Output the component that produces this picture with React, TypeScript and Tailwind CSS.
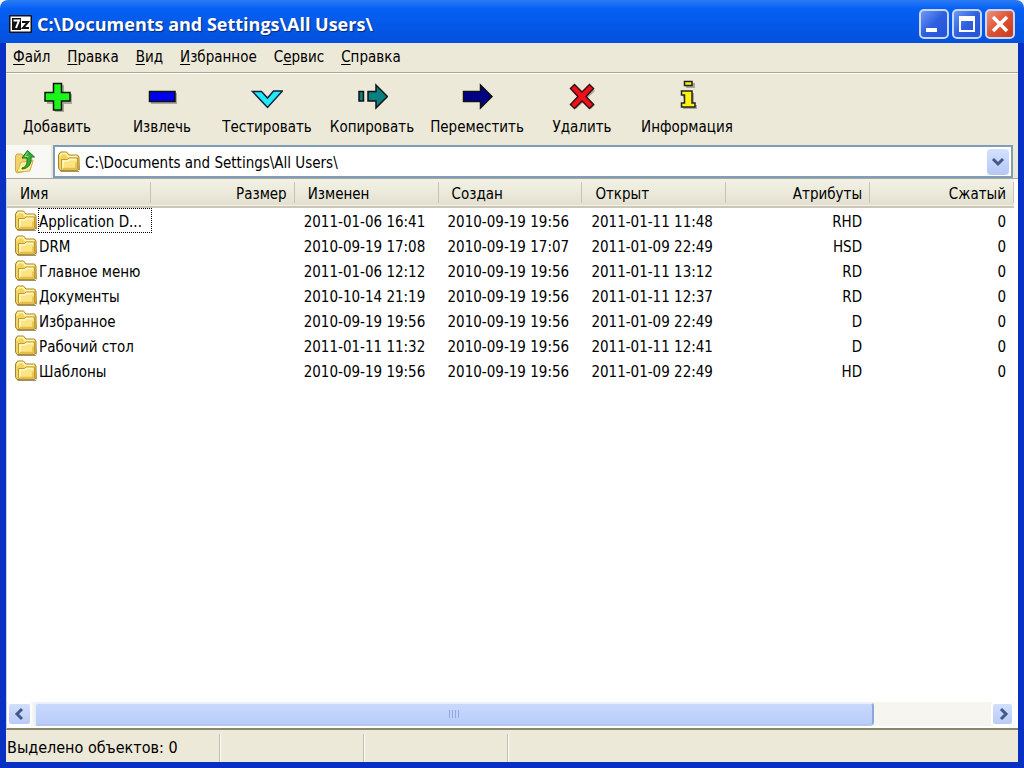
import type { ReactNode } from "react";

type Entry = {
  name: string;
  modified: string;
  created: string;
  accessed: string;
  attributes: string;
};

const menuItems = [
  { before: "", key: "Ф", after: "айл" },
  { before: "", key: "П", after: "равка" },
  { before: "", key: "В", after: "ид" },
  { before: "", key: "И", after: "збранное" },
  { before: "С", key: "е", after: "рвис" },
  { before: "", key: "С", after: "правка" },
];

const entries: Entry[] = [
  { name: "Application D...", modified: "2011-01-06 16:41", created: "2010-09-19 19:56", accessed: "2011-01-11 11:48", attributes: "RHD" },
  { name: "DRM", modified: "2010-09-19 17:08", created: "2010-09-19 17:07", accessed: "2011-01-09 22:49", attributes: "HSD" },
  { name: "Главное меню", modified: "2011-01-06 12:12", created: "2010-09-19 19:56", accessed: "2011-01-11 13:12", attributes: "RD" },
  { name: "Документы", modified: "2010-10-14 21:19", created: "2010-09-19 19:56", accessed: "2011-01-11 12:37", attributes: "RD" },
  { name: "Избранное", modified: "2010-09-19 19:56", created: "2010-09-19 19:56", accessed: "2011-01-09 22:49", attributes: "D" },
  { name: "Рабочий стол", modified: "2011-01-11 11:32", created: "2010-09-19 19:56", accessed: "2011-01-11 12:41", attributes: "D" },
  { name: "Шаблоны", modified: "2010-09-19 19:56", created: "2010-09-19 19:56", accessed: "2011-01-09 22:49", attributes: "HD" },
];

const columns = [
  { title: "Имя", right: false },
  { title: "Размер", right: true },
  { title: "Изменен", right: false },
  { title: "Создан", right: false },
  { title: "Открыт", right: false },
  { title: "Атрибуты", right: true },
  { title: "Сжатый", right: true },
];

function ToolIcon({ children }: { children: ReactNode }) {
  return (
    <svg width="32" height="32" viewBox="0 0 32 32" strokeWidth="1.5" aria-hidden="true">
      {children}
    </svg>
  );
}

const tools = [
  {
    label: "Добавить",
    icon: (
      <>
        <path d="M14 5h9v9h8v10h-8v8h-9v-8H6V14h8z" fill="#aaa79a" />
        <path d="M12.500 3.500h8v9h8.500v8.500h-8.500v9h-8v-9H4v-8.500h8.500z" fill="#1af51a" stroke="#111" />
      </>
    ),
  },
  {
    label: "Извлечь",
    icon: (
      <>
        <path d="M5 13h26v11H5z" fill="#aaa79a" />
        <path d="M3.500 11.500H29v10H3.500z" fill="#0000f0" stroke="#111" />
      </>
    ),
  },
  {
    label: "Тестировать",
    icon: (
      <path d="M1.500 11.500h9l6 6.500 6-7H31.500L16.500 27.500z" fill="#20eaf5" stroke="#124" />
    ),
  },
  {
    label: "Копировать",
    icon: (
      <path d="M3 11.500h4.500v9.500H3zM12 11.500h8V5l11.500 11.500L20 28v-7h-8z" fill="#088082" stroke="#111" />
    ),
  },
  {
    label: "Переместить",
    icon: (
      <path d="M2.500 11.500h17V5L31 16.500 19.500 28v-6.500h-17z" fill="#000087" stroke="#111" />
    ),
  },
  {
    label: "Удалить",
    icon: (
      <>
        <path d="M10 6l7.500 7L25 6l4 5-7.500 7 7.500 7-4 4-7.500-7-7.500 7-4-4 7-7-7-7z" fill="#aaa79a" />
        <path d="M8.500 4.500l7.500 7.500 7.500-7.500 4 4-7.500 8 7.500 8-4 4-7.500-7.500-7.500 7.500-4-4 7.500-8-7.500-8z" fill="#f0101c" stroke="#311" />
      </>
    ),
  },
  {
    label: "Информация",
    icon: (
      <>
        <path d="M15 3h9v5h-9zM12 13h11v12h3v4H12v-4h3v-7h-3z" fill="#aaa79a" />
        <path d="M13.500 1.500h7.500v4h-7.500zM10.500 11H21v12h3v4H10.500v-4h3v-8h-3z" fill="#fff212" stroke="#222" strokeWidth="1.500" />
      </>
    ),
  },
];

function FolderIcon() {
  return (
    <svg width="24" height="22" viewBox="0 0 24 22" className="shrink-0" aria-hidden="true">
      <path d="M3 20h19l1-1V8l-1 13H4z" fill="#75642e" opacity=".7" />
      <path d="M1.500 17V4l2-3h6l2.500 3h8.500l1.500 2v12L20.500 19.500H3z" fill="#f2d35e" stroke="#a5832b" />
      <path d="M3 5.500L4.500 2.500h4.500l2 3h9" fill="none" stroke="#fff6b8" strokeWidth="1.500" />
      <path d="M4.500 8.500h6l1.500-1.500h8.500V18l-1 1h-14l-1-1z" fill="#fbe481" stroke="#c19a35" />
      <path d="M6 17.500V10h5l1.500-1.500H19" fill="none" stroke="#fff8c9" strokeWidth="1.500" />
      <path d="M6 17.500h13v-6" fill="none" stroke="#e8bd42" strokeWidth="1.500" />
    </svg>
  );
}

function UpFolderIcon() {
  return (
    <svg width="22" height="26" viewBox="0 0 22 26" aria-hidden="true">
      <path d="M1.500 22V7l1.500-2h5l1 2h5v5l5-1-3 10.500L3 24z" fill="#f0d36a" stroke="#d1ab4c" />
      <path d="M3 23l4-10 12-1-3.500 10z" fill="#fff099" stroke="#d8b64e" />
      <path d="M8 19c4-1 5.500-4 5-10h-5L13.500 1.500 20.500 8H17c.8 7-2.500 11.500-9 12z" fill="#35ad38" stroke="#177620" />
      <path d="M13.500 3.500L11 7.500h3.500" fill="none" stroke="#8fe47a" />
    </svg>
  );
}

function Chevron({ d }: { d: string }) {
  return (
    <svg width="16" height="16" viewBox="0 0 16 16" fill="none" stroke="#435987" strokeWidth="3" aria-hidden="true">
      <path d={d} />
    </svg>
  );
}

function AppIcon() {
  return (
    <svg width="23" height="18" viewBox="0 0 23 18" className="shrink-0" role="img" aria-label="7-Zip">
      <rect width="23" height="18" rx="1" fill="#111" />
      <rect x="1.500" y="1.500" width="20" height="15" fill="#fff" />
      <rect x="3" y="3" width="9" height="12" fill="#111" />
      <path d="M4.500 5.500H10L7 13" fill="none" stroke="#fff" strokeWidth="2" />
      <path d="M13 7h6l-5 6h6" fill="none" stroke="#111" strokeWidth="2" />
    </svg>
  );
}

function TitleBar() {
  const button =
    "flex size-[30px] items-center justify-center rounded-[5px] border-2 border-[#c9d8f8]";
  return (
    <header className="flex h-[43px] shrink-0 items-center gap-[5px] rounded-t-lg bg-linear-to-b from-[#2a7af5] via-[#0560f4] via-20% to-[#0450dc] pt-1 pr-[9px] pl-[9px]">
      <AppIcon />
      <h1 className="flex-1 truncate pt-px font-['Open_Sans','Noto_Sans',sans-serif] text-[18px] leading-6 font-bold text-white [text-shadow:1px_1px_1px_#0a2a80]">
        C:\Documents and Settings\All Users\
      </h1>
      <div className="flex gap-[3px]">
        <button type="button" aria-label="Свернуть" className={`${button} bg-linear-to-br from-[#6f98f2] via-[#2e5fe0] to-[#2354d8]`}>
          <svg width="26" height="26" viewBox="0 0 26 26">
            <path d="M5 17h11v4H5z" fill="#fff" />
          </svg>
        </button>
        <button type="button" aria-label="Развернуть" className={`${button} bg-linear-to-br from-[#6f98f2] via-[#2e5fe0] to-[#2354d8]`}>
          <svg width="26" height="26" viewBox="0 0 26 26">
            <path d="M5 5h16v16H5zM7 10v9h12v-9z" fill="#fff" fillRule="evenodd" />
          </svg>
        </button>
        <button type="button" aria-label="Закрыть" className={`${button} bg-linear-to-br from-[#ec9078] via-[#dc5233] to-[#c83b1c]`}>
          <svg width="26" height="26" viewBox="0 0 26 26">
            <path d="M6 6l14 14M20 6L6 20" stroke="#fff" strokeWidth="3.500" />
          </svg>
        </button>
      </div>
    </header>
  );
}

function MenuBar() {
  return (
    <nav className="flex h-[30px] shrink-0 items-center gap-[17px] border-b border-[#aaa899] pl-[7px]">
      {menuItems.map((item) => (
        <button type="button" key={item.key + item.after}>
          {item.before}
          <span className="underline underline-offset-2">{item.key}</span>
          {item.after}
        </button>
      ))}
    </nav>
  );
}

function Toolbar() {
  return (
    <div role="toolbar" className="flex h-[72px] shrink-0 border-t border-white">
      {tools.map((tool) => (
        <button type="button" key={tool.label} className="flex w-[105px] flex-col items-center gap-[5px] pt-[6px] pr-[3px] whitespace-nowrap">
          <ToolIcon>{tool.icon}</ToolIcon>
          <span className="leading-5">{tool.label}</span>
        </button>
      ))}
    </div>
  );
}

function AddressBar() {
  return (
    <div className="flex h-[33px] shrink-0 gap-[2px] pr-[5px]">
      <button type="button" aria-label="Вверх" className="flex w-[45px] items-center bg-[#f8f8f4] pl-2">
        <UpFolderIcon />
      </button>
      <div className="flex flex-1 items-center gap-[4px] border-2 border-[#7f9db9] bg-white pr-[2px] pl-[2px]">
        <FolderIcon />
        <input
          aria-label="Адрес"
          defaultValue="C:\Documents and Settings\All Users\"
          className="min-w-0 flex-1 pt-[3px] outline-none"
        />
        <button type="button" aria-label="Показать список" className="flex h-[26px] w-[22px] items-center justify-center rounded-sm bg-linear-to-b from-[#d5e1fd] to-[#b4c8f6]">
          <Chevron d="M3 5l5 5 5-5" />
        </button>
      </div>
    </div>
  );
}

function FileList() {
  return (
    <main className="flex min-h-0 flex-1 flex-col border-t border-b-2 border-l border-t-[#aaa899] border-b-[#87866f] border-l-[#c5d2e0] bg-white pr-1 pb-[2px]">
      <div className="min-h-0 flex-1 overflow-hidden">
        <table className="w-full table-fixed border-collapse">
          <thead>
            <tr className="h-[28px] border-b-2 border-[#cbc7b8] bg-linear-to-b from-[#f3f1e6] via-[#ebeadb] to-[#e3e0d0]">
              {columns.map((column) => (
                <th
                  key={column.title}
                  className={`p-0 font-normal ${column.right ? "text-right" : "text-left"}`}
                >
                  <div className={`border-r border-[#c7c5b2] pt-[3px] leading-[18px] ${column.right ? "pr-[7px]" : "pl-[13px]"}`}>
                    {column.title}
                  </div>
                </th>
              ))}
            </tr>
          </thead>
          <tbody className="leading-[21px]">
            {entries.map((entry, index) => (
              <tr key={entry.name} className="h-[25px] whitespace-nowrap">
                <td className="p-0">
                  <div className="flex items-center pl-[7px]">
                    <FolderIcon />
                    <span
                      className={`border border-dotted pt-1 leading-[19px] ${index === 0 ? "-mr-px flex-1 border-black" : "border-transparent"}`}
                    >
                      {entry.name}
                    </span>
                  </div>
                </td>
                <td className="p-0" />
                <td className="p-0 pt-1 pl-[9px]">{entry.modified}</td>
                <td className="p-0 pt-1 pl-[9px]">{entry.created}</td>
                <td className="p-0 pt-1 pl-[9px]">{entry.accessed}</td>
                <td className="p-0 pt-1 pr-2 text-right">{entry.attributes}</td>
                <td className="p-0 pt-1 pr-2 text-right">0</td>
              </tr>
            ))}
          </tbody>
        </table>
      </div>
      <div className="flex h-6 shrink-0 gap-[2px] bg-[#f6f5f0]">
        <button type="button" aria-label="Прокрутить влево" className="flex w-[25px] items-center justify-center rounded-sm border-2 border-white bg-linear-to-b from-[#d2defd] to-[#b9cbf7]">
          <Chevron d="M10 3L5 8l5 5" />
        </button>
        <div className="flex-1">
          <div className="flex h-full w-[88%] items-center justify-center gap-[2px] rounded-sm border-2 border-[#e9effc] border-r-[#8fa7d6] border-b-[#b5c8ea] bg-linear-to-b from-[#c9d8fd] to-[#b9cdfa]">
            {[0, 1, 2, 3].map((i) => (
              <span key={i} className="h-2 w-px bg-[#8ea9e4]" />
            ))}
          </div>
        </div>
        <button type="button" aria-label="Прокрутить вправо" className="flex w-[23px] items-center justify-center rounded-sm border-2 border-white bg-linear-to-b from-[#d2defd] to-[#b9cbf7]">
          <Chevron d="M6 3l5 5-5 5" />
        </button>
      </div>
    </main>
  );
}

function StatusBar() {
  return (
    <footer className="flex h-8 shrink-0 items-center pt-1">
      <div className="w-[214px] border-r border-[#c0bda8] pl-px text-base leading-7">Выделено объектов: 0</div>
      <div className="h-7 w-[144px] border-r border-l border-r-[#c0bda8] border-l-white" />
      <div className="h-7 w-[144px] border-r border-l border-r-[#c0bda8] border-l-white" />
      <div className="h-7 flex-1 border-l border-white" />
    </footer>
  );
}

export default function App() {
  return (
    <div className="flex h-screen flex-col bg-[#f2f3e8] font-['DejaVu_Sans_Condensed','DejaVu_Sans',sans-serif] text-[15px] text-black">
      <TitleBar />
      <div className="flex min-h-0 flex-1 flex-col border-x-6 border-b-6 border-[#0831c4] bg-[#ece9d8]">
        <MenuBar />
        <Toolbar />
        <AddressBar />
        <FileList />
        <StatusBar />
      </div>
    </div>
  );
}
